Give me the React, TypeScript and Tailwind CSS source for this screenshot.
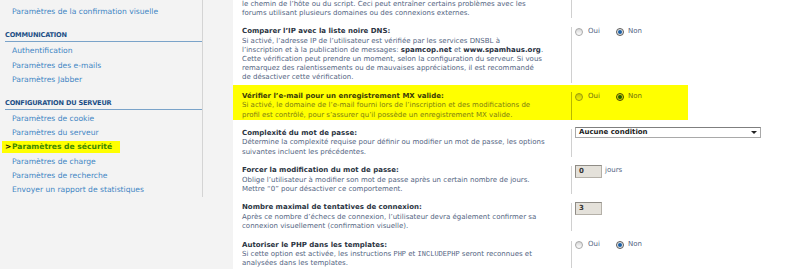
import React from "react";

type Row = {
  title?: string;
  lines: React.ReactNode[];
  control: React.ReactNode;
  hl?: boolean;
};

function Radio({ on, hl }: { on?: boolean; hl?: boolean }) {
  if (on) {
    return (
      <span
        className={`flex h-[8px] w-[8px] items-center justify-center rounded-full border ${
          hl ? "border-[#4a4a00] bg-[#d8d800]" : "border-[#5a5a5a] bg-[#e8e8e8]"
        }`}
      >
        <span className={`h-[4px] w-[4px] rounded-full ${hl ? "bg-[#1f5f00]" : "bg-[#1b5fa6]"}`} />
      </span>
    );
  }
  return (
    <span
      className={`h-[8px] w-[8px] rounded-full border ${
        hl
          ? "border-[#9a9a10] bg-gradient-to-b from-[#c8c800] to-[#f4f400]"
          : "border-[#a8a8a8] bg-gradient-to-b from-[#d6d6d6] to-white"
      }`}
    />
  );
}

function YesNo({ hl }: { hl?: boolean }) {
  return (
    <div className={`flex h-[9px] items-center ${hl ? "text-[#6d6d10]" : "text-[#536482]"}`}>
      <Radio hl={hl} />
      <span className="ml-[5px]">Oui</span>
      <span className="ml-[16px]">
        <Radio on hl={hl} />
      </span>
      <span className="ml-[4px]">Non</span>
    </div>
  );
}

function NumberBox({ value }: { value: string }) {
  return (
    <div className="-mt-[1px] flex h-[13px] w-[27px] items-center border border-[#b4b0a8] border-t-[#8f8c86] border-l-[#8f8c86] bg-[#e4e1da] pl-[3px] font-bold text-[#333]">
      {value}
    </div>
  );
}

const rows: Row[] = [
  {
    lines: [
      "le chemin de l’hôte ou du script. Ceci peut entraîner certains problèmes avec les",
      "forums utilisant plusieurs domaines ou des connexions externes.",
    ],
    control: null,
  },
  {
    title: "Comparer l’IP avec la liste noire DNS:",
    lines: [
      "Si activé, l’adresse IP de l’utilisateur est vérifiée par les services DNSBL à",
      <>
        l’inscription et à la publication de messages: <b className="text-[#28313f]">spamcop.net</b> et{" "}
        <b className="text-[#28313f]">www.spamhaus.org</b>.
      </>,
      "Cette vérification peut prendre un moment, selon la configuration du serveur. Si vous",
      "remarquez des ralentissements ou de mauvaises appréciations, il est recommandé",
      "de désactiver cette vérification.",
    ],
    control: <YesNo />,
  },
  {
    title: "Vérifier l’e-mail pour un enregistrement MX valide:",
    lines: [
      "Si activé, le domaine de l’e-mail fourni lors de l’inscription et des modifications de",
      "profil est contrôlé, pour s’assurer qu’il possède un enregistrement MX valide.",
    ],
    control: <YesNo hl />,
    hl: true,
  },
  {
    title: "Complexité du mot de passe:",
    lines: [
      "Détermine la complexité requise pour définir ou modifier un mot de passe, les options",
      "suivantes incluent les précédentes.",
    ],
    control: (
      <div className="-mt-[2px] flex h-[11px] w-[186px] items-center justify-between border border-[#a9a9a9] border-t-[#7f7f7f] bg-white pl-[3px] pr-[3px] font-bold text-[#222]">
        <span>Aucune condition</span>
        <span className="h-0 w-0 border-x-[3px] border-t-[3px] border-x-transparent border-t-[#222]" />
      </div>
    ),
  },
  {
    title: "Forcer la modification du mot de passe:",
    lines: [
      "Oblige l’utilisateur à modifier son mot de passe après un certain nombre de jours.",
      "Mettre “0” pour désactiver ce comportement.",
    ],
    control: (
      <div className="flex items-start">
        <NumberBox value="0" />
        <span className="ml-[3px] text-[#536482]">jours</span>
      </div>
    ),
  },
  {
    title: "Nombre maximal de tentatives de connexion:",
    lines: [
      "Après ce nombre d’échecs de connexion, l’utilisateur devra également confirmer sa",
      "connexion visuellement (confirmation visuelle).",
    ],
    control: <NumberBox value="3" />,
  },
  {
    title: "Autoriser le PHP dans les templates:",
    lines: [
      <>
        Si cette option est activée, les instructions{" "}
        <code className="font-['Liberation_Mono',monospace] text-[7px]">PHP</code> et{" "}
        <code className="font-['Liberation_Mono',monospace] text-[7px]">INCLUDEPHP</code> seront reconnues et
      </>,
      "analysées dans les templates.",
    ],
    control: <YesNo />,
  },
];

const menu = [
  {
    items: ["Paramètres de la confirmation visuelle"],
  },
  {
    title: "Communication",
    items: ["Authentification", "Paramètres des e-mails", "Paramètres Jabber"],
  },
  {
    title: "Configuration du serveur",
    items: [
      "Paramètres de cookie",
      "Paramètres du serveur",
      "Paramètres de sécurité",
      "Paramètres de charge",
      "Paramètres de recherche",
      "Envoyer un rapport de statistiques",
    ],
  },
];

export default function App() {
  return (
    <div className="flex h-[269px] w-[800px] overflow-hidden bg-[#f3f3f3] font-['DejaVu_Sans',Verdana,sans-serif] text-[7px]">
      {/* menu */}
      <aside className="w-[203px] shrink-0 self-start border-r border-[#d4d4d4] pt-[5px] text-[7.6px]">
        {menu.map((sec, i) => (
          <div key={i} className={sec.title ? "mt-[12px]" : ""}>
            {sec.title && (
              <div className="ml-[5px] border-b border-[#7aa3c9] pb-[1px] text-[6.6px] font-bold uppercase leading-[9px] tracking-[-0.2px] text-[#1d4f86]">
                {sec.title}
              </div>
            )}
            <ul className={sec.title ? "mt-[1.5px]" : ""}>
              {sec.items.map((it) =>
                it === "Paramètres de sécurité" ? (
                  <li key={it} className="flex h-[14.3px] items-center">
                    <span className="ml-[2px] flex h-[12px] items-center whitespace-nowrap bg-[#ffff00] pr-[8px] font-bold">
                      <span className="ml-[3px] w-[7px] text-[#111]">&gt;</span>
                      <span className="text-[#3f8a00]">{it}</span>
                    </span>
                  </li>
                ) : (
                  <li key={it} className="flex h-[14.3px] items-center whitespace-nowrap pl-[12px] text-[#3f86c4]">
                    {it}
                  </li>
                )
              )}
            </ul>
          </div>
        ))}
      </aside>

      {/* settings */}
      <main className="ml-[30px] flex flex-1 flex-col gap-[9.5px] bg-white pl-[9px] leading-[9.2px]">
        {rows.map((r, i) => (
          <div
            key={i}
            className={`flex ${i === 0 ? "-mt-[0.5px]" : ""} ${
              r.hl ? "-ml-[9px] -mt-[7px] w-[455px] bg-[#ffff00] pl-[9px] pt-[7px]" : ""
            }`}
          >
            <div
              className={`w-[329px] shrink-0 whitespace-nowrap ${
                r.hl ? "text-[#7d7d14]" : "text-[#536482]"
              }`}
            >
              {r.title && (
                <div className={`font-bold ${r.hl ? "text-[#3b3b08]" : "text-[#2b3442]"}`}>{r.title}</div>
              )}
              {r.lines.map((l, j) => (
                <div key={j}>{l}</div>
              ))}
            </div>
            <div className={`flex-1 border-l ${r.hl ? "border-[#b8b800]" : "border-[#d0d0d0]"} pl-[3px]`}>
              {r.control}
            </div>
          </div>
        ))}
      </main>
    </div>
  );
}
